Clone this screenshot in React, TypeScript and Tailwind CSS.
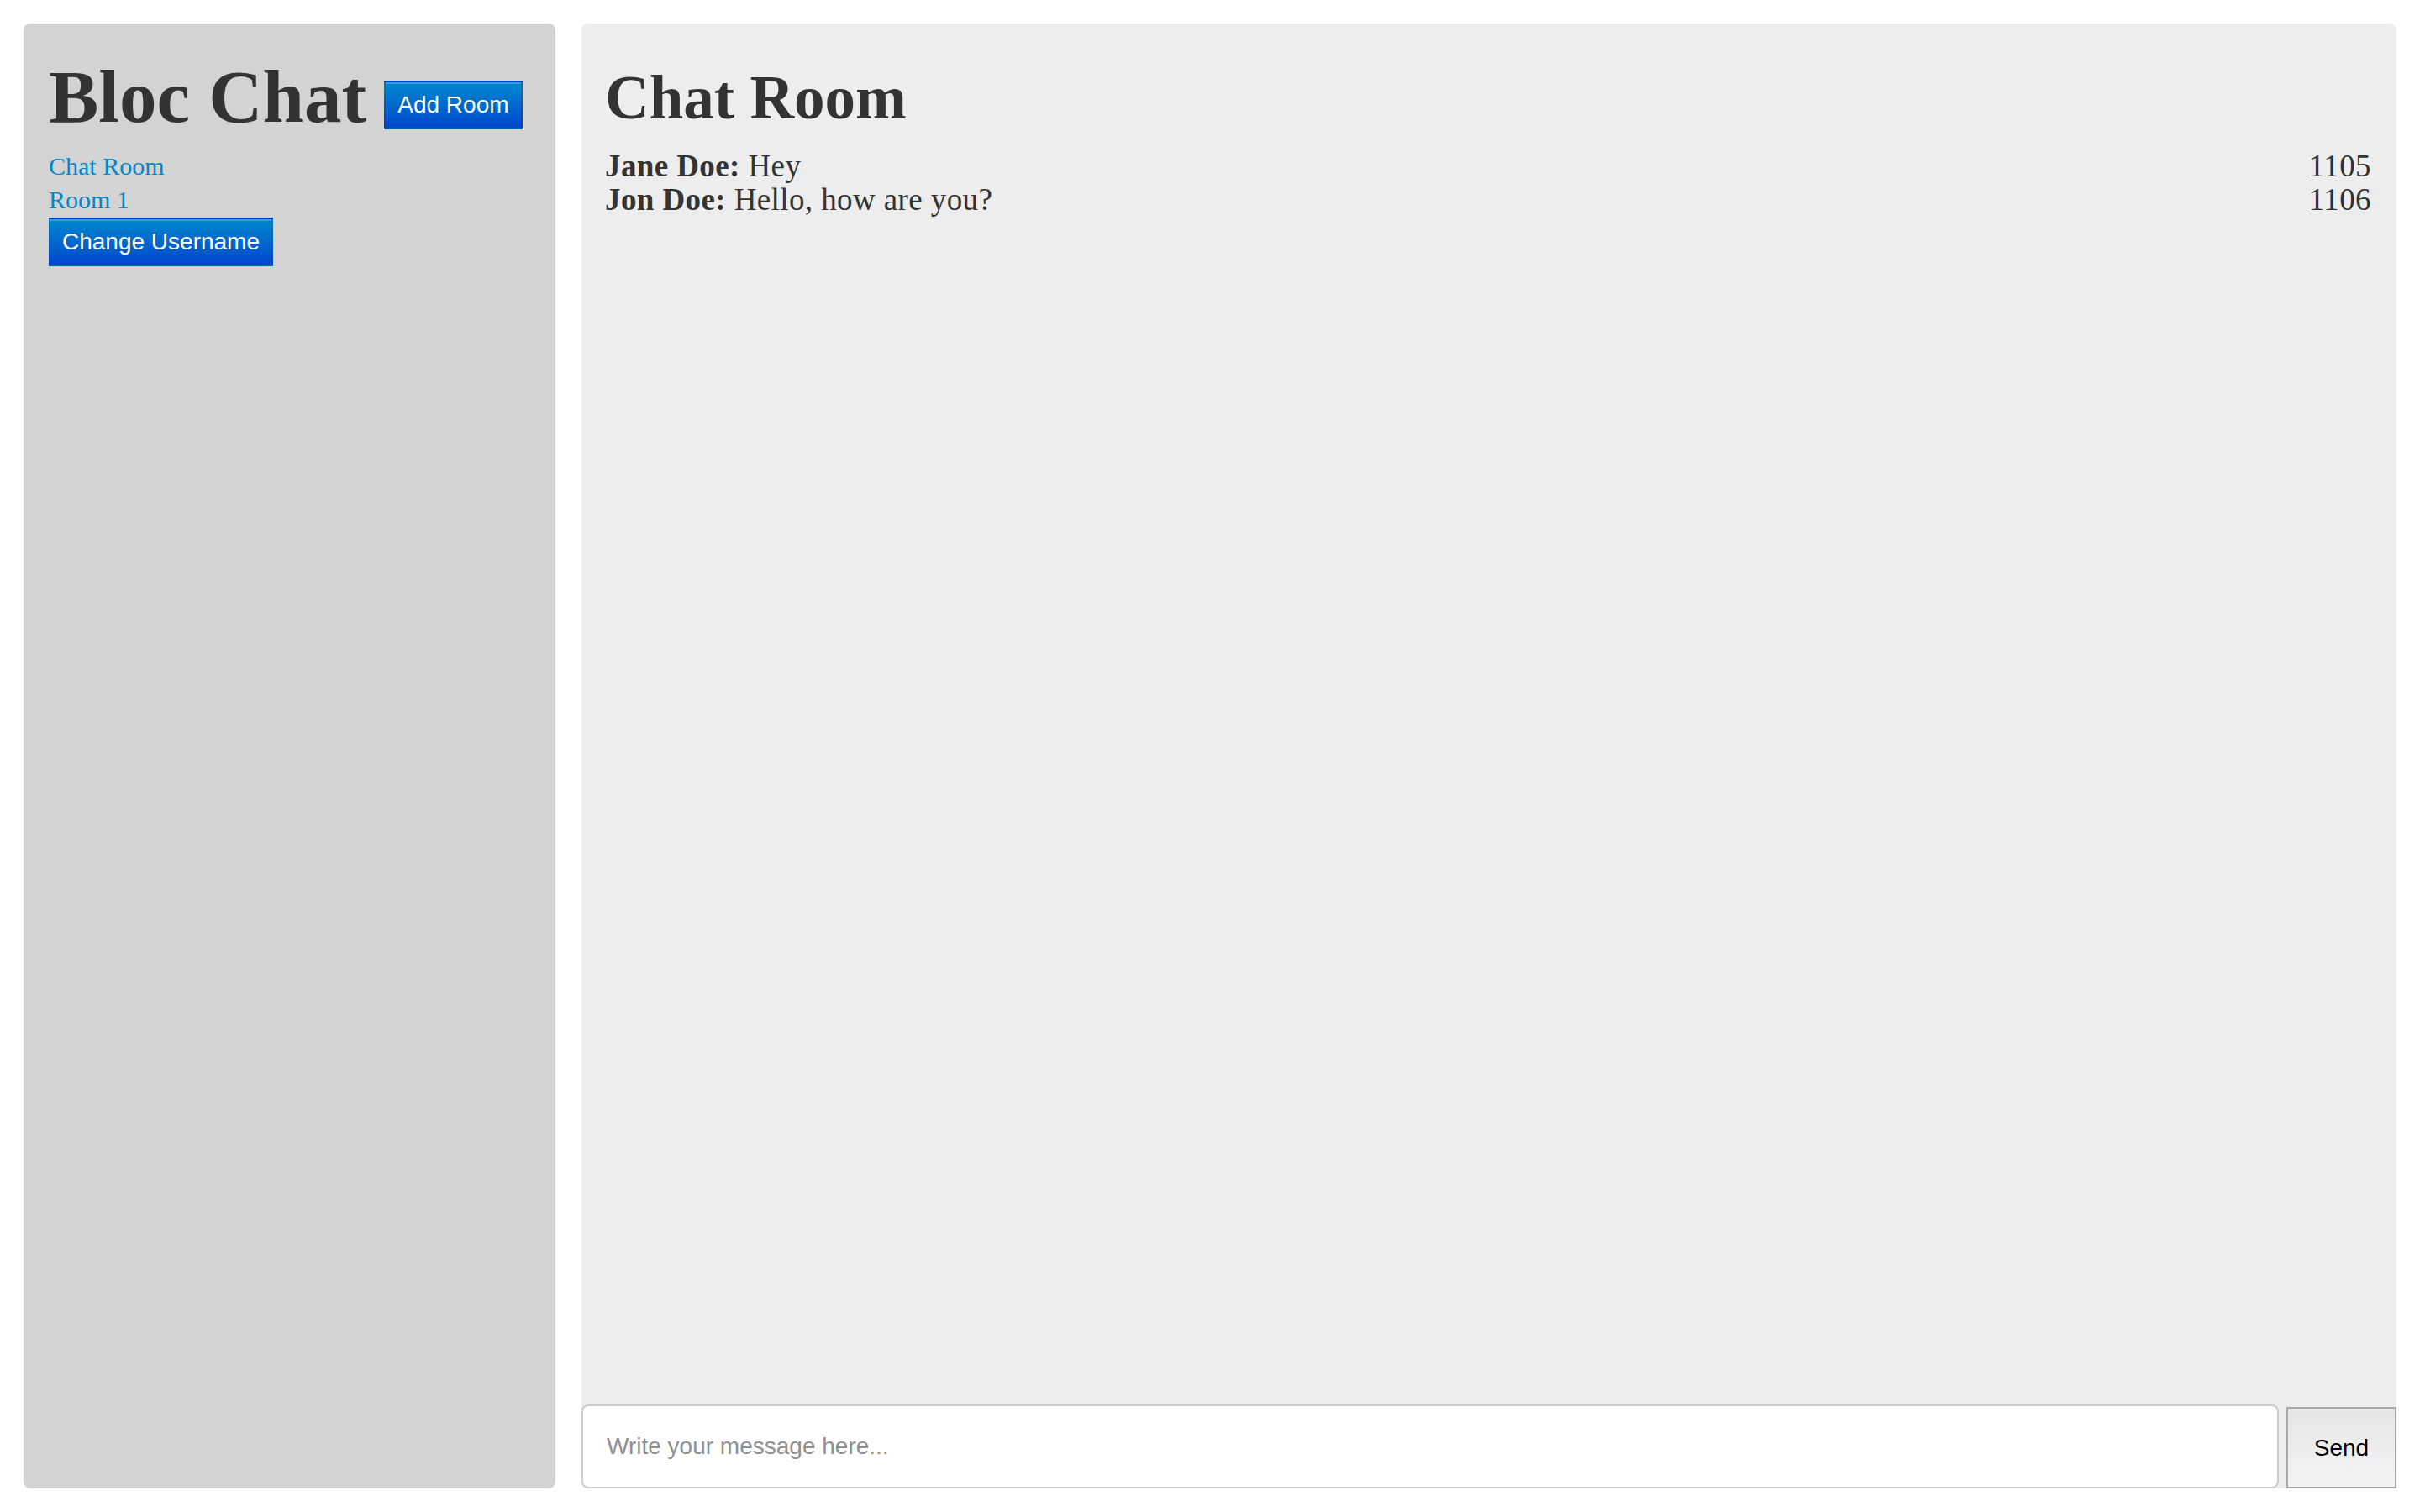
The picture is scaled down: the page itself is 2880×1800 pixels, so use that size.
const serif = "font-['Liberation_Serif',Georgia,serif]";
const sans = "font-['Liberation_Sans',Arial,sans-serif]";

const rooms = ["Chat Room", "Room 1"];

const messages = [
  { user: "Jane Doe", text: "Hey", sentAt: "1105" },
  { user: "Jon Doe", text: "Hello, how are you?", sentAt: "1106" },
];

const BlueButton = ({ label, className = "" }: { label: string; className?: string }) => {
  return (
    <button
      className={`${sans} border-2 border-[rgba(0,0,0,0.1)] border-b-[rgba(0,0,0,0.25)] bg-gradient-to-b from-[#0088cc] to-[#0044cc] px-[14px] py-[11px] text-[28px] leading-[32px] text-white shadow-[inset_0_2px_0_rgba(255,255,255,0.2)] ${className}`}
    >
      {label}
    </button>
  );
};

const Sidebar = () => {
  return (
    <aside className="flex w-[633px] shrink-0 flex-col items-start rounded-[8px] bg-[#d3d3d3] pl-[30px] pt-[43px]">
      <div className="flex items-start gap-[21px]">
        <h1 className={`${serif} text-[89px] font-bold leading-[88px] text-[#333333]`}>Bloc Chat</h1>
        <BlueButton label="Add Room" className="mt-[25px]" />
      </div>
      <ul className={`${serif} mt-[19px] text-[30px] leading-[40px] text-[#0088cc]`}>
        {rooms.map((room) => (
          <li key={room}>
            <a href="#">{room}</a>
          </li>
        ))}
      </ul>
      <BlueButton label="Change Username" className="mt-px" />
    </aside>
  );
};

const ChatRoom = () => {
  return (
    <main className="flex min-w-0 flex-1 flex-col rounded-[8px] bg-[#ededed]">
      <div className="flex-1 pl-[28px] pr-[30px] pt-[53px]">
        <h2 className={`${serif} text-[73px] font-bold leading-[72px] text-[#333333]`}>Chat Room</h2>
        <div className={`${serif} mt-[25px] text-[37px] leading-[40px] tracking-[0.4px] text-[#333333]`}>
          {messages.map((m) => (
            <div key={m.sentAt} className="flex justify-between">
              <p>
                <span className="font-bold">{m.user}:</span> {m.text}
              </p>
              <span>{m.sentAt}</span>
            </div>
          ))}
        </div>
      </div>
      <form className="flex items-end gap-[9px]" onSubmit={(e) => e.preventDefault()}>
        <input
          type="text"
          placeholder="Write your message here..."
          className={`${sans} h-[100px] flex-1 rounded-[8px] border-2 border-[#cccccc] bg-white px-[28px] text-[28px] text-[#333333] outline-none placeholder:text-[#8f8f8f]`}
        />
        <button
          type="submit"
          className={`${sans} h-[97px] w-[131px] border-2 border-[#a8a8a8] bg-gradient-to-b from-[#e6e6e6] to-[#f4f4f4] text-[28px] text-black`}
        >
          Send
        </button>
      </form>
    </main>
  );
};

export default function App() {
  return (
    <div className="flex h-[1800px] gap-[31px] bg-white p-[28px]">
      <Sidebar />
      <ChatRoom />
    </div>
  );
}
